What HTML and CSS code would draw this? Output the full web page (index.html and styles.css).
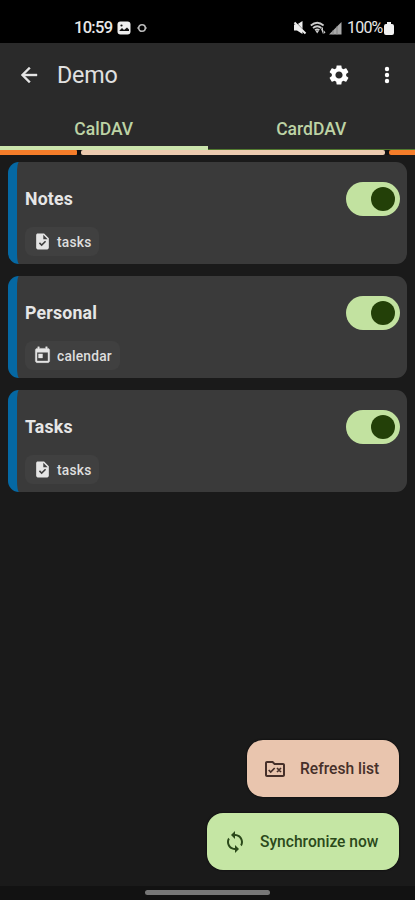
FILE: index.html
```html
<!DOCTYPE html>
<html lang="en">
<head>
<meta charset="utf-8">
<title>Demo</title>
<link rel="stylesheet" href="styles.css">
</head>
<body>
<svg class="defs" aria-hidden="true">
  <symbol id="task" viewBox="0 0 24 24"><path fill-rule="evenodd" d="M14 2H6c-1.100 0-2 .9-2 2v16c0 1.100.9 2 2 2h12c1.100 0 2-.9 2-2V8zm-3.060 16L7.400 14.460l1.410-1.410 2.120 2.120 4.240-4.240 1.410 1.410zM13 9V3.500L18.500 9z"/></symbol>
  <symbol id="event" viewBox="0 0 24 24"><path fill-rule="evenodd" d="M19 3h-1V1h-2v2H8V1H6v2H5c-1.110 0-2 .9-2 2v14c0 1.100.89 2 2 2h14c1.100 0 2-.9 2-2V5c0-1.100-.9-2-2-2zm0 16H5V8h14zM7 10h5v5H7z" stroke="#e5e5e5" stroke-width=".5"/></symbol>
</svg>
<div class="screen">
  <div class="status">
    <div class="group">
      <span class="clock">10:59</span>
      <svg class="photo" viewBox="0 0 14 14"><rect x=".5" y=".5" width="13" height="13" rx="3" fill="#eee"/><path d="M2.500 9.500 5 7l2 2 3-2.500 2 2V10H2.500z" fill="#111"/><circle cx="4.500" cy="4.500" r="1.100" fill="#111"/></svg>
      <svg class="ring" viewBox="0 0 10 10"><circle cx="5" cy="5" r="3.300" fill="none" stroke="#bbb" stroke-width="1.600"/><path d="M0 5h2M8 5h2" stroke="#bbb"/></svg>
    </div>
    <div class="group">
      <svg class="mute" viewBox="0 0 14 14"><path d="M1 3.500h3L9.500 0v13L4 9.500H1z" fill="#eee"/><path d="M2.500 1 13 12" stroke="#000" stroke-width="1"/><path d="m1.500 1.500 11 11" stroke="#eee" stroke-width="2"/></svg>
      <svg class="wifi" viewBox="0 0 16 14"><g fill="none" stroke="#ccc" stroke-width="1.700"><path d="M.8 4.500q6.400-5.500 12.800 0M3 7q4.200-3.500 8.400 0M5 9.200q2.200-1.800 4.400 0"/></g><path d="m5.200 9.500 2 3 2-3zM11 8l2-2v7M13.500 13V9l2 2.500" fill="#ccc"/></svg>
      <svg class="signal" viewBox="0 0 13 13"><path d="M0 12.500 12.500 0v12.500z" fill="#aaa"/><path d="M4 8v5M8 4v9" stroke="#777" stroke-width=".7"/></svg>
      <span class="percent">100%</span>
      <svg class="battery" viewBox="0 0 10 13"><path d="M3 0h4v2h1q2 0 2 2v7q0 2-2 2H2q-2 0-2-2V4q0-2 2-2h1z" fill="#f2f2f2"/></svg>
    </div>
  </div>
  <header class="bar">
    <svg class="back" viewBox="0 0 24 24"><path d="M20 11H7.830l5.590-5.590L12 4l-8 8 8 8 1.410-1.410L7.830 13H20z" fill="#e4e4e4" stroke="#e4e4e4" stroke-width=".4"/></svg>
    <h1>Demo</h1>
    <svg class="gear" viewBox="0 0 24 24"><path fill="#fff" d="M19.140 12.940c.04-.3.06-.61.06-.94 0-.32-.02-.64-.07-.94l2.030-1.580c.18-.14.23-.41.12-.61l-1.920-3.320c-.12-.22-.37-.29-.59-.22l-2.390.96c-.5-.38-1.030-.7-1.620-.94l-.36-2.540c-.04-.24-.24-.41-.48-.41h-3.840c-.24 0-.43.17-.47.41l-.36 2.540c-.59.24-1.130.57-1.620.94l-2.390-.96c-.22-.08-.47 0-.59.22L2.740 8.870c-.12.21-.08.47.12.61l2.030 1.580c-.05.3-.09.63-.09.94s.02.64.07.94l-2.030 1.580c-.18.14-.23.41-.12.61l1.920 3.320c.12.22.37.29.59.22l2.390-.96c.5.38 1.030.7 1.620.94l.36 2.540c.05.24.24.41.48.41h3.840c.24 0 .44-.17.47-.41l.36-2.540c.59-.24 1.130-.56 1.620-.94l2.390.96c.22.08.47 0 .59-.22l1.920-3.320c.12-.22.07-.47-.12-.61zM12 15.600c-1.980 0-3.600-1.620-3.600-3.600s1.620-3.600 3.600-3.600 3.600 1.620 3.600 3.600-1.620 3.600-3.600 3.600z"/></svg>
    <svg class="more" viewBox="0 0 24 24"><g fill="#fff"><circle cx="12" cy="6" r="2.200"/><circle cx="12" cy="12" r="2.200"/><circle cx="12" cy="18" r="2.200"/></g></svg>
  </header>
  <nav class="tabs">
    <span class="tab active">CalDAV</span>
    <span class="tab">CardDAV</span>
  </nav>
  <div class="progress"><i class="run first"></i><i class="rest"></i><i class="run last"></i></div>
  <main class="list">
    <section class="card">
      <div class="info"><h2>Notes</h2><span class="chip"><svg viewBox="0 0 24 24"><use href="#task"/></svg>tasks</span></div>
      <span class="switch"><i></i></span>
    </section>
    <section class="card">
      <div class="info"><h2>Personal</h2><span class="chip"><svg viewBox="0 0 24 24"><use href="#event"/></svg>calendar</span></div>
      <span class="switch"><i></i></span>
    </section>
    <section class="card">
      <div class="info"><h2>Tasks</h2><span class="chip"><svg viewBox="0 0 24 24"><use href="#task"/></svg>tasks</span></div>
      <span class="switch"><i></i></span>
    </section>
  </main>
  <div class="actions">
    <div class="fab refresh"><svg viewBox="0 0 24 24"><path fill-rule="evenodd" d="M20 6h-8l-2-2H4c-1.100 0-2 .9-2 2v12c0 1.100.9 2 2 2h16c1.100 0 2-.9 2-2V8c0-1.100-.9-2-2-2zm0 12H4V6h5.170l2 2H20z"/><path d="m5.700 13 2 2 4-4M14 11l4 4m0-4-4 4" fill="none" stroke="currentColor" stroke-width="1.700"/></svg><span>Refresh list</span></div>
    <div class="fab sync"><svg viewBox="0 0 24 24"><path d="M12 4V1L8 5l4 4V6c3.310 0 6 2.690 6 6 0 1.010-.25 1.970-.7 2.800l1.460 1.460A7.930 7.930 0 0 0 20 12c0-4.420-3.580-8-8-8zm0 14c-3.310 0-6-2.690-6-6 0-1.010.25-1.970.7-2.800L5.240 7.740A7.930 7.930 0 0 0 4 12c0 4.420 3.580 8 8 8v3l4-4-4-4z"/></svg><span>Synchronize now</span></div>
  </div>
  <div class="gesture"><i></i></div>
</div>
</body>
</html>
```
FILE: styles.css
```css
* { box-sizing: border-box; }
body { margin: 0; background: #1a1a1a; font-family: Roboto, sans-serif; }
svg { display: block; flex: none; }
.defs { position: absolute; width: 0; height: 0; }
.screen { width: 415px; height: 900px; display: flex; flex-direction: column; overflow: hidden; }
.status { height: 43px; flex: none; background: #000; color: #e8e8e8; display: flex; justify-content: space-between; padding: 14px 21px 0 74px; font-size: 16.5px; line-height: 28px; }
.group { display: flex; align-items: center; height: 28px; }
.clock { width: 38px; letter-spacing: -.7px; font-weight: 500; }
.photo { width: 14px; height: 14px; margin-left: 5px; }
.ring { width: 10px; height: 10px; margin-left: 6px; }
.mute { width: 14px; height: 14px; }
.wifi { width: 16px; height: 14px; margin-left: 3px; }
.signal { width: 13px; height: 13px; margin-left: 3px; }
.percent { width: 36px; margin-left: 5px; font-size: 16px; letter-spacing: -.8px; white-space: nowrap; }
.battery { width: 10px; height: 13px; margin-left: 1px; }
.bar { height: 65px; flex: none; background: #2a2a2a; display: flex; align-items: center; padding: 0 16px 1px 17px; }
.back { width: 24px; height: 24px; }
.bar h1 { margin: 0 auto 0 16px; font-size: 23.3px; line-height: 30px; font-weight: 400; color: #e0e0e0; letter-spacing: -.2px; }
.gear { width: 24px; height: 24px; margin-right: 24px; }
.more { width: 24px; height: 24px; }
.tabs { height: 42px; flex: none; background: #2a2a2a; display: flex; border-bottom: 1px solid #527a2f; }
.tab { flex: 1; text-align: center; font-size: 17.5px; line-height: 42px; font-weight: 500; color: #bdd3a5; }
.tab.active { height: 42px; border-bottom: 4px solid #cbe4ac; }
.progress { height: 5px; flex: none; display: flex; gap: 4px; background: #101010; }
.run { background: #f57d2a; }
.first { width: 77px; border-radius: 0 1px 1px 0; }
.rest { flex: 1; background: #eccaaf; border-radius: 2px; }
.last { width: 26px; border-radius: 2px 0 0 2px; }
.list { padding: 7px 8px 0; display: flex; flex-direction: column; gap: 12.200px; }
.card { height: 102px; border-radius: 11px; overflow: hidden; background: #3a3a3a; border-left: 9px solid #0568a3; display: flex; justify-content: space-between; padding: 20px 7px 0 8px; }
.info { display: flex; flex-direction: column; align-items: flex-start; }
.card h2 { margin: 4px 0 14px; font-size: 17.7px; line-height: 26px; font-weight: 700; color: #e6e6e6; letter-spacing: .2px; }
.chip { height: 29px; margin-top: 1px; border-radius: 8px; background: #404040; display: flex; align-items: center; gap: 5px; padding: 0 8px 0 8px; font-size: 13.8px; font-weight: 500; color: #dedede; letter-spacing: .2px; }
.chip svg { width: 19px; height: 19px; fill: #e5e5e5; }
.switch { width: 54px; height: 34px; border-radius: 17px; background: #c2e2a0; display: flex; justify-content: flex-end; padding: 5px; }
.switch i { width: 24px; height: 24px; border-radius: 50%; background: #234008; }
.actions { margin-top: auto; display: flex; flex-direction: column; align-items: flex-end; gap: 16px; padding: 0 16px 16px 0; }
.fab { height: 57px; border-radius: 16px; display: flex; align-items: center; font-size: 15.600px; font-weight: 500; white-space: nowrap; padding-left: 16px; box-shadow: 0 0 2px #050505; }
.fab svg { width: 24px; height: 24px; fill: currentColor; margin-right: 13px; }
.refresh { width: 152px; background: #e9c5ae; color: #46302a; }
.sync { width: 192px; background: #c5e6a4; color: #2b491a; }
.gesture { height: 14px; flex: none; background: #121212; display: flex; justify-content: center; padding-top: 4px; }
.gesture i { width: 125px; height: 5px; border-radius: 3px; background: #777; }
```
